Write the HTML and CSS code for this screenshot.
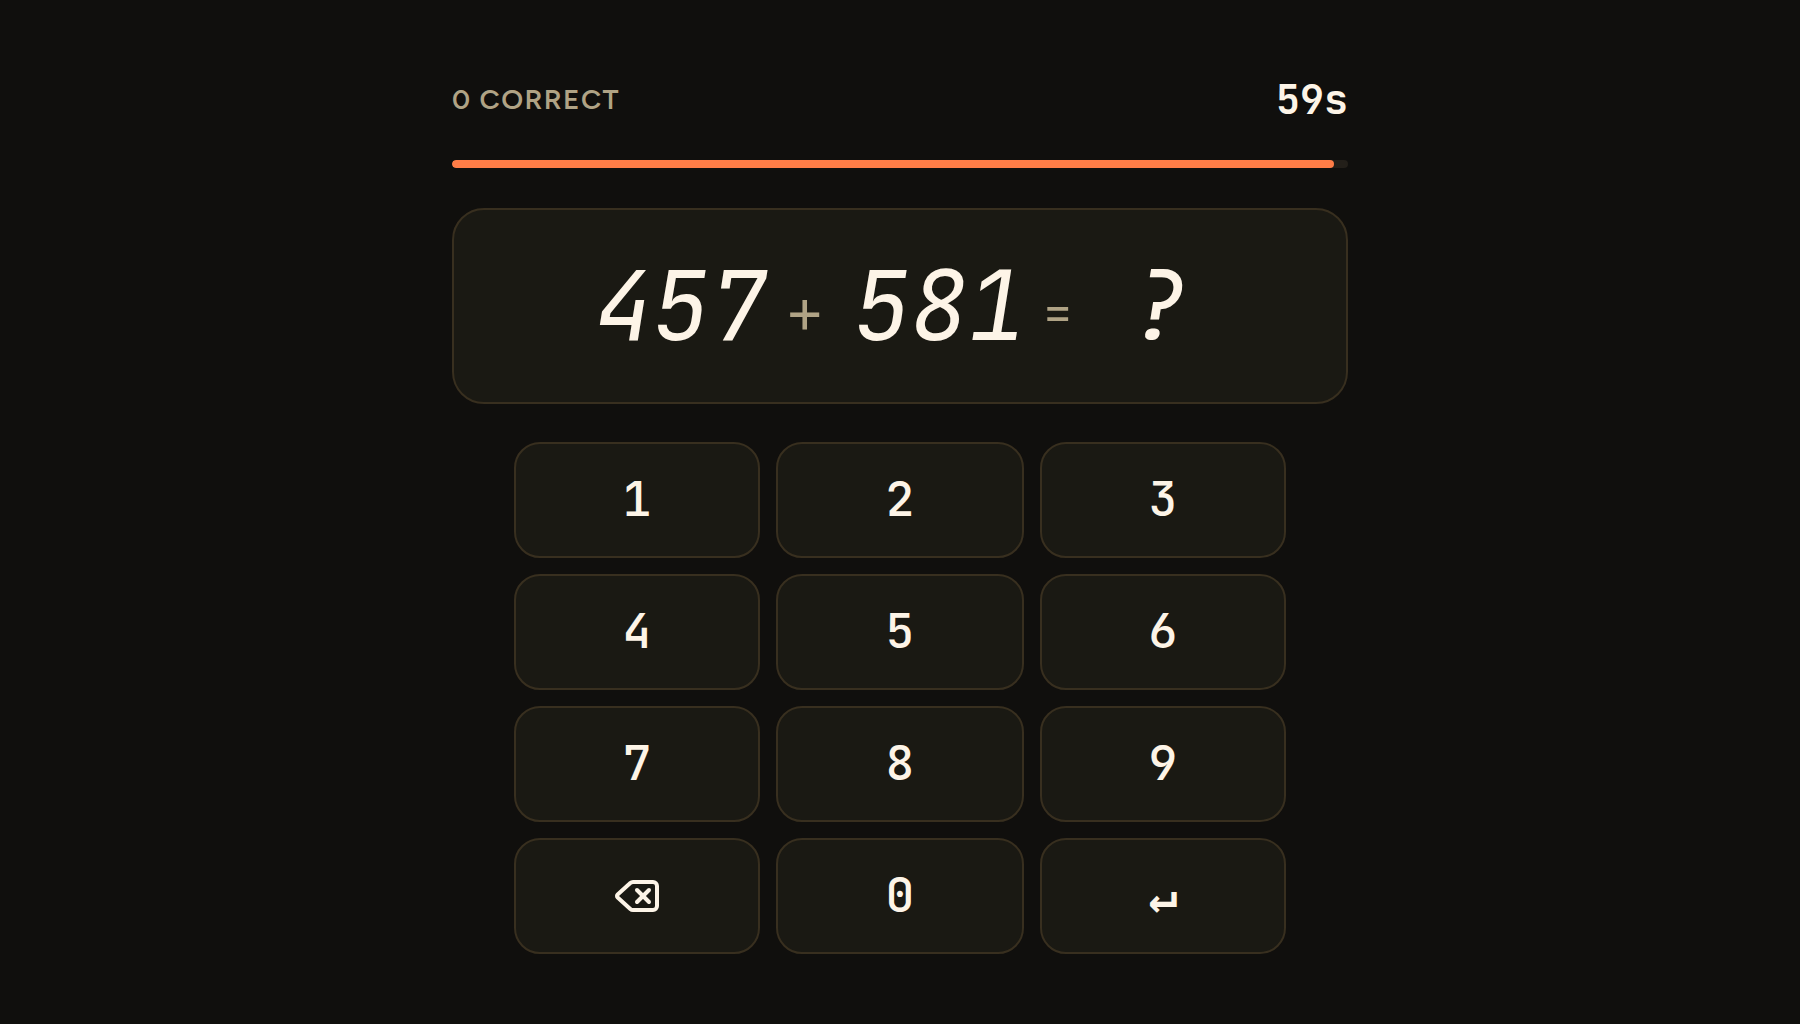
FILE: index.html
```html
<!DOCTYPE html>
<html lang="en">
<head>
  <meta charset="utf-8">
  <meta name="viewport" content="width=device-width, initial-scale=1">
  <title>Mental Math Sprint</title>
  <link rel="stylesheet" href="styles.css">
</head>
<body>
  <main class="game">
    <header class="status">
      <span class="score">0 CORRECT</span>
      <span class="timer">59s</span>
    </header>
    <div class="progress" role="progressbar" aria-label="Time left" aria-valuemin="0" aria-valuemax="60" aria-valuenow="59">
      <div class="progress-fill" style="width: 98.4%"></div>
    </div>
    <section class="problem" aria-label="Problem">
      <span class="operand">457</span>
      <span class="operator">+</span>
      <span class="operand">581</span>
      <span class="operator equals">=</span>
      <span class="answer">?</span>
    </section>
    <div class="keypad">
      <button class="key" type="button">1</button>
      <button class="key" type="button">2</button>
      <button class="key" type="button">3</button>
      <button class="key" type="button">4</button>
      <button class="key" type="button">5</button>
      <button class="key" type="button">6</button>
      <button class="key" type="button">7</button>
      <button class="key" type="button">8</button>
      <button class="key" type="button">9</button>
      <button class="key key-with-icon" type="button" aria-label="Backspace">
        <svg class="key-icon" viewBox="0 0 24 24" fill="none" stroke="currentColor" stroke-width="2" stroke-linecap="round" stroke-linejoin="round" aria-hidden="true">
          <path d="M10 5a2 2 0 0 0-1.344.519l-6.328 5.74a1 1 0 0 0 0 1.481l6.328 5.741A2 2 0 0 0 10 19h10a2 2 0 0 0 2-2V7a2 2 0 0 0-2-2z"/>
          <path d="m12 9 6 6"/>
          <path d="m18 9-6 6"/>
        </svg>
      </button>
      <button class="key" type="button">0</button>
      <button class="key key-enter" type="button" aria-label="Enter">↵</button>
    </div>
  </main>
</body>
</html>
```
FILE: styles.css
```css
:root {
  --bg: #100f0d;
  --surface: #1a1913;
  --border: #382f1f;
  --text: #fdf4e7;
  --muted: #b0a385;
  --accent: #ff7d47;
  --sans: Figtree, Inter, sans-serif;
  --mono: "JetBrains Mono", "DejaVu Sans Mono", monospace;
}

* {
  box-sizing: border-box;
}

body {
  margin: 0;
  min-height: 100vh;
  background: var(--bg);
  color: var(--text);
  font-family: var(--sans);
}

.game {
  display: flex;
  flex-direction: column;
  max-width: 944px;
  margin: 0 auto;
  padding: 72px 24px;
}

.status {
  display: flex;
  align-items: center;
  justify-content: space-between;
  height: 54px;
  margin-bottom: 34px;
}

.score {
  color: var(--muted);
  font-size: 28px;
  font-weight: 600;
  letter-spacing: 0.05em;
}

.timer {
  font-family: var(--mono);
  font-size: 40px;
  font-weight: 700;
}

.progress {
  height: 8px;
  margin-bottom: 40px;
  border-radius: 4px;
  background: #231f19;
  overflow: hidden;
}

.progress-fill {
  height: 100%;
  border-radius: 4px;
  background: var(--accent);
}

.problem {
  display: flex;
  align-items: center;
  justify-content: center;
  height: 196px;
  margin-bottom: 38px;
  border: 2px solid var(--border);
  border-radius: 32px;
  background: var(--surface);
  line-height: 1;
}

.operand,
.answer {
  font-family: var(--mono);
  font-size: 96px;
  font-style: italic;
}

.operator {
  margin: 0 28px 0 18px;
  padding-top: 12px;
  color: var(--muted);
  font-size: 64px;
}

.equals {
  margin: 0 40px 0 16px;
  font-size: 52px;
}

.answer {
  min-width: 92px;
  text-align: center;
}

.keypad {
  display: grid;
  grid-template-columns: 123fr 124fr 123fr;
  gap: 16px;
  width: 100%;
  max-width: 772px;
  margin: 0 auto;
}

.key {
  display: flex;
  align-items: center;
  justify-content: center;
  height: 116px;
  padding: 0 0 2px;
  border: 2px solid var(--border);
  border-radius: 26px;
  background: var(--surface);
  color: var(--text);
  font-family: var(--mono);
  font-size: 48px;
  font-weight: 500;
  line-height: 1;
  cursor: pointer;
}

.key-with-icon {
  padding: 0;
}

.key-enter {
  font-weight: 600;
}

.key-icon {
  width: 48px;
  height: 48px;
}
```
